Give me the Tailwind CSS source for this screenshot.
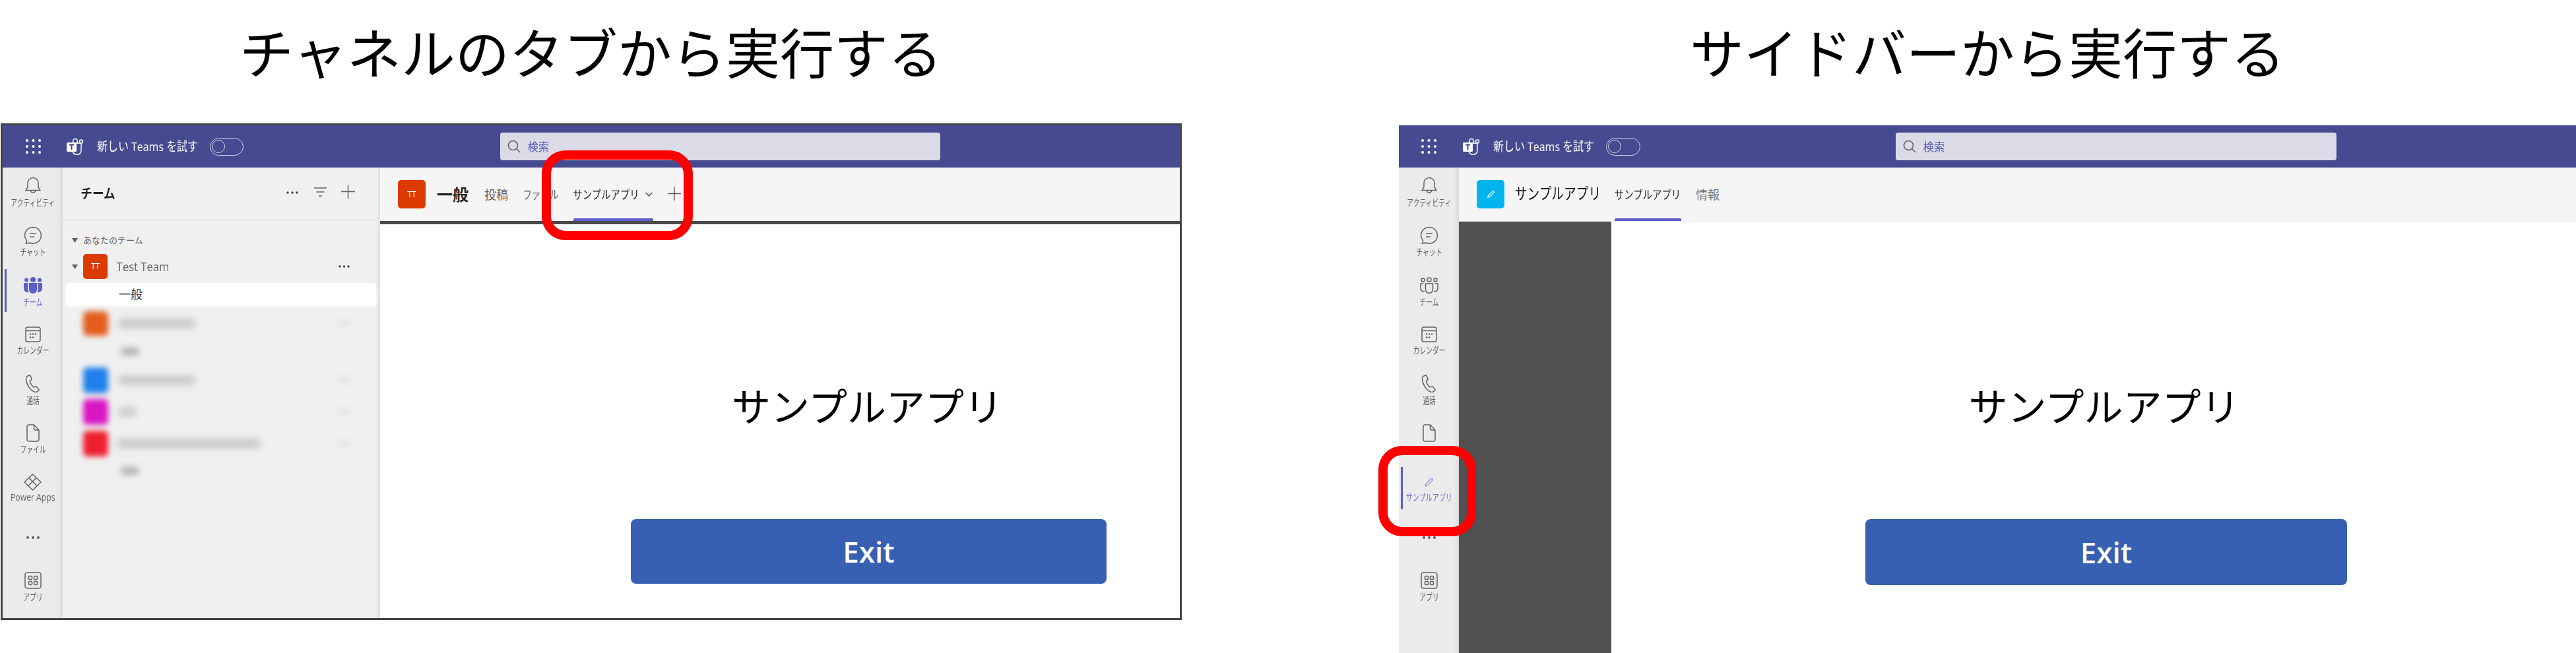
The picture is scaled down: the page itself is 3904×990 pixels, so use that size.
<!doctype html>
<html lang="ja">
<head>
<meta charset="utf-8">
<script src="https://cdn.jsdelivr.net/npm/@tailwindcss/browser@4"></script>
</head>
<body class="bg-white font-['Open_Sans','Noto_Sans_CJK_JP',sans-serif]">
<div class="w-[3904px] h-[990px] overflow-hidden grid grid-cols-[1791px_329px_1784px] grid-rows-[187px_803px]">
  <!-- titles -->
  <div class="flex items-center justify-center text-[82px] leading-none text-black pb-[27px] whitespace-nowrap">チャネルのタブから実行する</div>
  <div></div>
  <div class="flex items-center justify-center text-[82px] leading-none text-black pb-[27px] whitespace-nowrap">サイドバーから実行する</div>

  <!-- LEFT WINDOW -->
  <div class="relative ml-px h-[753px] border-[3px] border-[#444444] flex flex-col">
    <div class="h-[64px] shrink-0 bg-[#464a91] flex items-center text-white">
      <svg class="ml-[35px] w-[23px] h-[22px]" viewBox="0 0 23 22" fill="#fff"><circle cx="2" cy="2" r="2"/><circle cx="11.500" cy="2" r="2"/><circle cx="21" cy="2" r="2"/><circle cx="2" cy="11" r="2"/><circle cx="11.500" cy="11" r="2"/><circle cx="21" cy="11" r="2"/><circle cx="2" cy="20" r="2"/><circle cx="11.500" cy="20" r="2"/><circle cx="21" cy="20" r="2"/></svg>
      <svg class="ml-[39px] w-[26px] h-[26px]" viewBox="0 0 26 26"><path d="M8 8h14v11a6.500 6.500 0 0 1-13 0z" fill="none" stroke="#fff" stroke-width="1.500"/><circle cx="13" cy="5" r="3.500" fill="none" stroke="#fff" stroke-width="1.500"/><circle cx="22" cy="5.500" r="2.500" fill="none" stroke="#fff" stroke-width="1.500"/><rect x="0" y="7" width="15" height="14" rx="1.500" fill="#fff"/><path d="M4 10.500h7M7.500 10.500v7.500" stroke="#464a91" stroke-width="2" fill="none"/></svg>
      <div class="ml-[18px] w-[157px] flex justify-center whitespace-nowrap text-[19px] leading-none scale-x-[0.84]"><span class="shrink-0">新しい Teams を試す</span></div>
      <div class="ml-[16px] w-[51px] h-[27px] rounded-full border-[1.5px] border-[#d5d6e6] flex items-center pl-[2px]"><div class="w-[20px] h-[20px] rounded-full border-[1.5px] border-[#d5d6e6]"></div></div>
      <div class="ml-[389px] w-[667px] h-[42px] bg-[#dbdbe8] rounded-[4px] flex items-center pl-[11px]">
        <svg class="w-[20px] h-[20px]" viewBox="0 0 20 20" fill="none" stroke="#616161" stroke-width="1.600"><circle cx="8.500" cy="8.500" r="7"/><path d="M13.500 13.500L19 19"/></svg>
        <span class="ml-[10px] text-[17px] leading-none text-[#4f56b0] scale-x-[0.95]">検索</span>
      </div>
    </div>
    <div class="flex flex-1 min-h-0">
      <!-- rail -->
      <div class="w-[91px] shrink-0 bg-[#ebebeb] shadow-[inset_-8px_0_6px_-6px_rgba(0,0,0,0.1)] pt-[14px] relative">
        <div class="absolute left-[3px] top-[154px] w-[3px] h-[65px] bg-[#5b5fc7]"></div>
        <div class="h-[75px] flex flex-col items-center">
          <svg class="w-[24px] h-[26px]" viewBox="0 0 24 26" fill="none" stroke="#616161" stroke-width="1.500"><path d="M12 1.500a8 8 0 0 0-8 8v6l-2.800 5h21.600l-2.800-5v-6a8 8 0 0 0-8-8zM8.500 20.800a3.500 3.500 0 0 0 7 0"/></svg>
          <div class="mt-[6px] h-[14px] flex justify-center whitespace-nowrap text-[14px] leading-[14px] text-[#616161] scale-x-[0.7]">アクティビティ</div>
        </div>
        <div class="h-[77px] flex flex-col items-center">
          <svg class="w-[28px] h-[27px]" viewBox="0 0 28 27" fill="none" stroke="#616161" stroke-width="1.500"><path d="M14 1.500a12.300 12.300 0 1 1-5 23.500c-2 .8-4 1-6 .8 1.200-1 1.800-2.500 1.600-4A12.300 12.300 0 0 1 14 1.500z"/><path d="M9 11h10M9 16h7"/></svg>
          <div class="mt-[5px] h-[14px] flex justify-center whitespace-nowrap text-[14px] leading-[14px] text-[#616161] scale-x-[0.7]">チャット</div>
        </div>
        <div class="h-[75px] flex flex-col items-center">
          <svg class="w-[28px] h-[26px]" viewBox="0 0 28 26" fill="#5b5fc7"><circle cx="14" cy="4" r="4"/><circle cx="4" cy="4.500" r="3"/><circle cx="24" cy="4.500" r="3"/><path d="M8 9h12v10a6 6 0 0 1-12 0z"/><path d="M0 9h6.500v9c0 2 .4 3.500 1 5A6 6 0 0 1 0 17zM28 9h-6.500v9c0 2-.4 3.500-1 5a6 6 0 0 0 7.500-6z"/></svg>
          <div class="mt-[5px] h-[14px] flex justify-center whitespace-nowrap text-[14px] leading-[14px] text-[#5b5fc7] scale-x-[0.7]">チーム</div>
        </div>
        <div class="h-[73px] flex flex-col items-center">
          <svg class="w-[24px] h-[24px]" viewBox="0 0 24 24" fill="none" stroke="#616161" stroke-width="1.500"><rect x="1" y="1" width="22" height="22" rx="3"/><path d="M1 6.500h22"/><g fill="#616161" stroke="none"><circle cx="8" cy="11.500" r="1.300"/><circle cx="12" cy="11.500" r="1.300"/><circle cx="16" cy="11.500" r="1.300"/><circle cx="8" cy="16.500" r="1.300"/><circle cx="12" cy="16.500" r="1.300"/></g></svg>
          <div class="mt-[5px] h-[14px] flex justify-center whitespace-nowrap text-[14px] leading-[14px] text-[#616161] scale-x-[0.7]">カレンダー</div>
        </div>
        <div class="h-[75px] flex flex-col items-center">
          <svg class="w-[24px] h-[27px]" viewBox="0 0 24 27" fill="none" stroke="#616161" stroke-width="1.500"><path d="M3 2.500l3-1.300c1-.3 1.800 0 2.200.9l1.700 4c.3.800.1 1.600-.6 2.100l-2 1.600c.8 3.500 3 7 6 9.300l2.600-1c.8-.3 1.600-.1 2.100.6l2.600 3.400c.6.800.4 1.800-.4 2.400l-2.300 1.500c-1 .6-2.300.7-3.400.2C7 23.500 2 15 1.500 6c0-1.500.5-2.800 1.500-3.500z"/></svg>
          <div class="mt-[5px] h-[14px] flex justify-center whitespace-nowrap text-[14px] leading-[14px] text-[#616161] scale-x-[0.7]">通話</div>
        </div>
        <div class="h-[75px] flex flex-col items-center">
          <svg class="w-[20px] h-[27px]" viewBox="0 0 20 27" fill="none" stroke="#616161" stroke-width="1.500"><path d="M3.500 1h8l7.500 8v14.500a2.500 2.500 0 0 1-2.500 2.500h-13A2.500 2.500 0 0 1 1 23.500v-20A2.500 2.500 0 0 1 3.500 1zM11.500 1v5.500a2.500 2.500 0 0 0 2.500 2.500h5"/></svg>
          <div class="mt-[4px] h-[14px] flex justify-center whitespace-nowrap text-[14px] leading-[14px] text-[#616161] scale-x-[0.7]">ファイル</div>
        </div>
        <div class="h-[75px] flex flex-col items-center">
          <svg class="w-[27px] h-[26px]" viewBox="0 0 27 26" fill="none" stroke="#616161" stroke-width="1.500"><path d="M13.500 1L26 13 13.500 25 1 13zM8 6.500l12 12M19 6.500L7 18.500"/></svg>
          <div class="mt-[3px] h-[14px] flex justify-center whitespace-nowrap text-[14px] leading-[14px] text-[#616161] scale-x-[0.87]">Power Apps</div>
        </div>
        <div class="h-[74px] flex justify-center pt-[19px]">
          <svg class="w-[22px] h-[6px]" viewBox="0 0 22 6" fill="#616161"><circle cx="3" cy="3" r="2"/><circle cx="11" cy="3" r="2"/><circle cx="19" cy="3" r="2"/></svg>
        </div>
        <div class="h-[60px] flex flex-col items-center">
          <svg class="w-[26px] h-[26px]" viewBox="0 0 26 26" fill="none" stroke="#616161" stroke-width="1.500"><rect x="1" y="1" width="24" height="24" rx="3.500"/><rect x="6.500" y="6.500" width="5" height="5" rx="1"/><rect x="14.500" y="6.500" width="5" height="5" rx="1"/><rect x="6.500" y="14.500" width="5" height="5" rx="1"/><rect x="14.500" y="14.500" width="5" height="5" rx="1"/></svg>
          <div class="mt-[5px] h-[14px] flex justify-center whitespace-nowrap text-[14px] leading-[14px] text-[#616161] scale-x-[0.7]">アプリ</div>
        </div>
      </div>
      <!-- team panel -->
      <div class="w-[481px] shrink-0 bg-[#f0f0f0] shadow-[inset_-8px_0_6px_-6px_rgba(0,0,0,0.1)] flex flex-col">
        <div class="h-[81px] shrink-0 border-b-2 border-[#e8e8e8] flex items-center pl-[27px]">
          <div class="w-[53px] flex justify-center whitespace-nowrap font-bold text-[20px] leading-none text-[#242424] scale-x-[0.88]">チーム</div>
          <svg class="ml-[259px] w-[18px] h-[6px] -mt-[4px]" viewBox="0 0 18 6" fill="#424242"><circle cx="2" cy="3" r="1.700"/><circle cx="9" cy="3" r="1.700"/><circle cx="16" cy="3" r="1.700"/></svg>
          <svg class="ml-[24px] w-[19px] h-[14px] -mt-[6px]" viewBox="0 0 19 14" fill="none" stroke="#616161" stroke-width="1.500"><path d="M0 1h19M3.500 7h12M7 13h5"/></svg>
          <svg class="ml-[22px] w-[21px] h-[21px] -mt-[6px]" viewBox="0 0 21 21" fill="none" stroke="#616161" stroke-width="1.500"><path d="M0 10.500h21M10.500 0v21"/></svg>
        </div>
        <div class="pl-[14px] mt-[19px] h-[20px] flex items-center">
          <svg class="w-[9px] h-[7px]" viewBox="0 0 9 7" fill="#616161"><path d="M0 0h9L4.500 7z"/></svg>
          <div class="ml-[8px] whitespace-nowrap text-[13px] leading-none text-[#616161]">あなたのチーム</div>
        </div>
        <div class="pl-[14px] mt-[11px] h-[38px] flex items-center">
          <svg class="w-[9px] h-[7px]" viewBox="0 0 9 7" fill="#616161"><path d="M0 0h9L4.500 7z"/></svg>
          <div class="ml-[8px] w-[37px] h-[38px] rounded-[5px] bg-[#dc3b00] flex items-center justify-center text-white text-[12px] leading-none">TT</div>
          <div class="ml-[14px] w-[79px] flex justify-center whitespace-nowrap text-[18px] leading-none text-[#616161] scale-x-[0.92]">Test Team</div>
          <svg class="ml-[257px] w-[17px] h-[6px]" viewBox="0 0 17 6" fill="#424242"><circle cx="2" cy="3" r="1.700"/><circle cx="8.500" cy="3" r="1.700"/><circle cx="15" cy="3" r="1.700"/></svg>
        </div>
        <div class="ml-[5px] mr-[6px] mt-[6px] h-[33px] bg-white rounded-t-[5px] flex items-center pl-[80px] text-[18px] leading-none text-[#424242] shadow-[0_3px_4px_rgba(255,255,255,0.8)]">一般</div>
        <!-- blurred rows -->
        <div class="pl-[31px] mt-[10px] h-[36px] flex items-center">
          <div class="w-[38px] h-[37px] rounded-[6px] bg-[#e35d1f] blur-[4px]"></div>
          <div class="ml-[16px] w-[115px] h-[13px] bg-[#c4c4c4] blur-[6px]"></div>
          <div class="ml-[218px] w-[18px] h-[4px] bg-[#d8d8d8] blur-[4px]"></div>
        </div>
        <div class="pl-[89px] mt-[16px] h-[18px] flex items-center"><div class="w-[26px] h-[12px] bg-[#b4b4b4] blur-[5px]"></div></div>
        <div class="pl-[31px] mt-[15px] h-[38px] flex items-center">
          <div class="w-[38px] h-[39px] rounded-[6px] bg-[#2280ea] blur-[4px]"></div>
          <div class="ml-[16px] w-[115px] h-[13px] bg-[#c4c4c4] blur-[6px]"></div>
          <div class="ml-[218px] w-[18px] h-[4px] bg-[#d8d8d8] blur-[4px]"></div>
        </div>
        <div class="pl-[31px] mt-[10px] h-[38px] flex items-center">
          <div class="w-[38px] h-[39px] rounded-[6px] bg-[#d916c3] blur-[4px]"></div>
          <div class="ml-[16px] w-[26px] h-[13px] bg-[#c8c8c8] blur-[6px]"></div>
          <div class="ml-[307px] w-[18px] h-[4px] bg-[#d8d8d8] blur-[4px]"></div>
        </div>
        <div class="pl-[31px] mt-[10px] h-[38px] flex items-center">
          <div class="w-[38px] h-[39px] rounded-[6px] bg-[#ee2030] blur-[4px]"></div>
          <div class="ml-[14px] w-[216px] h-[13px] bg-[#c4c4c4] blur-[6px]"></div>
          <div class="ml-[119px] w-[18px] h-[4px] bg-[#d8d8d8] blur-[4px]"></div>
        </div>
        <div class="pl-[89px] mt-[14px] h-[18px] flex items-center"><div class="w-[26px] h-[12px] bg-[#b4b4b4] blur-[5px]"></div></div>
      </div>
      <!-- main -->
      <div class="flex-1 min-w-0 flex flex-col bg-white">
        <div class="h-[86px] shrink-0 bg-[#f5f5f5] border-b-[5px] border-[#4a4a4a] flex items-start pl-[27px] pt-[19px] relative">
          <div class="w-[42px] h-[43px] rounded-[5px] bg-[#dc3b00] flex items-center justify-center text-white text-[12px] leading-none">TT</div>
          <div class="ml-[17px] w-[48px] h-[43px] flex items-center justify-center whitespace-nowrap font-bold text-[24px] leading-none text-[#242424]">一般</div>
          <div class="ml-[24px] w-[36px] h-[43px] flex items-center justify-center whitespace-nowrap text-[18px] leading-none text-[#616161]">投稿</div>
          <div class="ml-[23px] w-[53px] h-[43px] flex items-center justify-center whitespace-nowrap text-[18px] leading-none text-[#616161] scale-x-[0.75]">ファイル</div>
          <div class="ml-[23px] w-[99px] h-[43px] flex items-center justify-center whitespace-nowrap text-[18px] leading-none text-[#242424] scale-x-[0.8]">サンプルアプリ</div>
          <svg class="ml-[10px] mt-[18px] w-[11px] h-[7px]" viewBox="0 0 11 7" fill="none" stroke="#424242" stroke-width="1.300"><path d="M.5 1l5 5 5-5"/></svg>
          <svg class="ml-[23px] mt-[10px] w-[20px] h-[21px]" viewBox="0 0 20 21" fill="none" stroke="#616161" stroke-width="1.500"><path d="M0 10.500h20M10 0v21"/></svg>
          <div class="absolute left-[293px] top-[77px] w-[121px] h-[4px] rounded-t-[2px] bg-[#5b5fc7]"></div>
        </div>
        <div class="w-[721px] ml-[378px] mt-[236px] h-[80px] flex items-center justify-center whitespace-nowrap text-[59px] leading-none text-black">サンプルアプリ</div>
        <div class="w-[721px] ml-[380px] mt-[131px] h-[98px] rounded-[8px] bg-[#3760b2] flex items-center justify-center font-semibold text-[44px] leading-none text-white">Exit</div>
      </div>
    </div>
    <!-- annotation -->
    <div class="absolute left-[817px] top-[38px] w-[229px] h-[136px] rounded-[36px] border-[14px] border-[#ff0000]"></div>
  </div>

  <div></div>

  <!-- RIGHT WINDOW -->
  <div class="relative mt-[3px] flex flex-col h-[800px]">
    <div class="h-[64px] shrink-0 bg-[#464a91] flex items-center text-white">
      <svg class="ml-[34px] w-[23px] h-[22px]" viewBox="0 0 23 22" fill="#fff"><circle cx="2" cy="2" r="2"/><circle cx="11.500" cy="2" r="2"/><circle cx="21" cy="2" r="2"/><circle cx="2" cy="11" r="2"/><circle cx="11.500" cy="11" r="2"/><circle cx="21" cy="11" r="2"/><circle cx="2" cy="20" r="2"/><circle cx="11.500" cy="20" r="2"/><circle cx="21" cy="20" r="2"/></svg>
      <svg class="ml-[40px] w-[26px] h-[26px]" viewBox="0 0 26 26"><path d="M8 8h14v11a6.500 6.500 0 0 1-13 0z" fill="none" stroke="#fff" stroke-width="1.500"/><circle cx="13" cy="5" r="3.500" fill="none" stroke="#fff" stroke-width="1.500"/><circle cx="22" cy="5.500" r="2.500" fill="none" stroke="#fff" stroke-width="1.500"/><rect x="0" y="7" width="15" height="14" rx="1.500" fill="#fff"/><path d="M4 10.500h7M7.500 10.500v7.500" stroke="#464a91" stroke-width="2" fill="none"/></svg>
      <div class="ml-[18px] w-[157px] flex justify-center whitespace-nowrap text-[19px] leading-none scale-x-[0.84]"><span class="shrink-0">新しい Teams を試す</span></div>
      <div class="ml-[16px] w-[52px] h-[27px] rounded-full border-[1.5px] border-[#d5d6e6] flex items-center pl-[2px]"><div class="w-[20px] h-[20px] rounded-full border-[1.5px] border-[#d5d6e6]"></div></div>
      <div class="ml-[387px] w-[668px] h-[42px] bg-[#dbdbe8] rounded-[4px] flex items-center pl-[11px]">
        <svg class="w-[20px] h-[20px]" viewBox="0 0 20 20" fill="none" stroke="#616161" stroke-width="1.600"><circle cx="8.500" cy="8.500" r="7"/><path d="M13.500 13.500L19 19"/></svg>
        <span class="ml-[10px] text-[17px] leading-none text-[#4f56b0] scale-x-[0.95]">検索</span>
      </div>
    </div>
    <div class="flex flex-1 min-h-0">
      <div class="w-[91px] shrink-0 bg-[#ebebeb] shadow-[inset_-8px_0_6px_-6px_rgba(0,0,0,0.1)] pt-[14px] relative">
        <div class="h-[75px] flex flex-col items-center">
          <svg class="w-[24px] h-[26px]" viewBox="0 0 24 26" fill="none" stroke="#616161" stroke-width="1.500"><path d="M12 1.500a8 8 0 0 0-8 8v6l-2.800 5h21.600l-2.800-5v-6a8 8 0 0 0-8-8zM8.500 20.800a3.500 3.500 0 0 0 7 0"/></svg>
          <div class="mt-[6px] h-[14px] flex justify-center whitespace-nowrap text-[14px] leading-[14px] text-[#616161] scale-x-[0.7]">アクティビティ</div>
        </div>
        <div class="h-[77px] flex flex-col items-center">
          <svg class="w-[28px] h-[27px]" viewBox="0 0 28 27" fill="none" stroke="#616161" stroke-width="1.500"><path d="M14 1.500a12.300 12.300 0 1 1-5 23.500c-2 .8-4 1-6 .8 1.200-1 1.800-2.500 1.600-4A12.300 12.300 0 0 1 14 1.500z"/><path d="M9 11h10M9 16h7"/></svg>
          <div class="mt-[5px] h-[14px] flex justify-center whitespace-nowrap text-[14px] leading-[14px] text-[#616161] scale-x-[0.7]">チャット</div>
        </div>
        <div class="h-[75px] flex flex-col items-center">
          <svg class="w-[28px] h-[26px]" viewBox="0 0 28 26" fill="none" stroke="#616161" stroke-width="1.500"><circle cx="14" cy="4" r="3"/><circle cx="4.500" cy="4.500" r="2.500"/><circle cx="23.500" cy="4.500" r="2.500"/><path d="M8.500 10h11v9a5.500 5.500 0 0 1-11 0zM5.500 10H1v7a5 5 0 0 0 6 5M22.500 10H27v7a5 5 0 0 1-6 5"/></svg>
          <div class="mt-[5px] h-[14px] flex justify-center whitespace-nowrap text-[14px] leading-[14px] text-[#616161] scale-x-[0.7]">チーム</div>
        </div>
        <div class="h-[73px] flex flex-col items-center">
          <svg class="w-[24px] h-[24px]" viewBox="0 0 24 24" fill="none" stroke="#616161" stroke-width="1.500"><rect x="1" y="1" width="22" height="22" rx="3"/><path d="M1 6.500h22"/><g fill="#616161" stroke="none"><circle cx="8" cy="11.500" r="1.300"/><circle cx="12" cy="11.500" r="1.300"/><circle cx="16" cy="11.500" r="1.300"/><circle cx="8" cy="16.500" r="1.300"/><circle cx="12" cy="16.500" r="1.300"/></g></svg>
          <div class="mt-[5px] h-[14px] flex justify-center whitespace-nowrap text-[14px] leading-[14px] text-[#616161] scale-x-[0.7]">カレンダー</div>
        </div>
        <div class="h-[75px] flex flex-col items-center">
          <svg class="w-[24px] h-[27px]" viewBox="0 0 24 27" fill="none" stroke="#616161" stroke-width="1.500"><path d="M3 2.500l3-1.300c1-.3 1.800 0 2.200.9l1.700 4c.3.800.1 1.600-.6 2.100l-2 1.600c.8 3.500 3 7 6 9.300l2.600-1c.8-.3 1.600-.1 2.100.6l2.600 3.400c.6.800.4 1.800-.4 2.400l-2.300 1.500c-1 .6-2.300.7-3.400.2C7 23.500 2 15 1.500 6c0-1.500.5-2.800 1.500-3.500z"/></svg>
          <div class="mt-[5px] h-[14px] flex justify-center whitespace-nowrap text-[14px] leading-[14px] text-[#616161] scale-x-[0.7]">通話</div>
        </div>
        <div class="h-[45px] flex flex-col items-center">
          <svg class="w-[20px] h-[27px]" viewBox="0 0 20 27" fill="none" stroke="#616161" stroke-width="1.500"><path d="M3.500 1h8l7.500 8v14.500a2.500 2.500 0 0 1-2.500 2.500h-13A2.500 2.500 0 0 1 1 23.500v-20A2.500 2.500 0 0 1 3.500 1zM11.500 1v5.500a2.500 2.500 0 0 0 2.500 2.500h5"/></svg>
          <div class="mt-[4px] h-[14px] flex justify-center whitespace-nowrap text-[14px] leading-[14px] text-[#616161] scale-x-[0.7]">ファイル</div>
        </div>
        <div class="h-[124px] bg-[#ebebeb] relative shadow-[inset_-8px_0_6px_-6px_rgba(0,0,0,0.1)] flex flex-col items-center pt-[37px]">
          <div class="absolute left-[3px] top-[20px] w-[3px] h-[64px] bg-[#5b5fc7]"></div>
          <svg class="w-[13px] h-[13px]" viewBox="0 0 13 13" fill="none" stroke="#8b8fd8" stroke-width="1.200"><path d="M1 12l.7-3.300L9.500 1a1.600 1.600 0 0 1 2.400 2.300L4.300 11.200z"/></svg>
          <div class="mt-[9px] h-[14px] flex justify-center whitespace-nowrap text-[14px] leading-[14px] text-[#6f73d2] scale-x-[0.72]">サンプルアプリ</div>
        </div>
        <div class="h-[55px] flex justify-center">
          <svg class="w-[22px] h-[6px]" viewBox="0 0 22 6" fill="#616161"><circle cx="3" cy="3" r="2"/><circle cx="11" cy="3" r="2"/><circle cx="19" cy="3" r="2"/></svg>
        </div>
        <div class="h-[60px] flex flex-col items-center">
          <svg class="w-[26px] h-[26px]" viewBox="0 0 26 26" fill="none" stroke="#616161" stroke-width="1.500"><rect x="1" y="1" width="24" height="24" rx="3.500"/><rect x="6.500" y="6.500" width="5" height="5" rx="1"/><rect x="14.500" y="6.500" width="5" height="5" rx="1"/><rect x="6.500" y="14.500" width="5" height="5" rx="1"/><rect x="14.500" y="14.500" width="5" height="5" rx="1"/></svg>
          <div class="mt-[5px] h-[14px] flex justify-center whitespace-nowrap text-[14px] leading-[14px] text-[#616161] scale-x-[0.7]">アプリ</div>
        </div>
      </div>
      <div class="flex-1 min-w-0 flex flex-col">
        <div class="h-[82px] shrink-0 bg-[#f5f5f5] border-b border-[#ececec] flex items-start pl-[27px] pt-[19px] relative">
          <div class="w-[42px] h-[43px] rounded-[5px] bg-[#00b4f0] flex items-center justify-center">
            <svg class="w-[11px] h-[11px]" viewBox="0 0 13 13" fill="none" stroke="#fff" stroke-width="1.300"><path d="M1 12l.7-3.300L9.500 1a1.600 1.600 0 0 1 2.400 2.300L4.300 11.200z"/></svg>
          </div>
          <div class="ml-[17px] w-[128px] h-[40px] flex items-center justify-center whitespace-nowrap text-[24px] leading-none text-[#111111] scale-x-[0.78]">サンプルアプリ</div>
          <div class="ml-[22px] w-[100px] h-[43px] flex items-center justify-center whitespace-nowrap text-[18px] leading-none text-[#242424] scale-x-[0.8]">サンプルアプリ</div>
          <div class="ml-[23px] w-[36px] h-[43px] flex items-center justify-center whitespace-nowrap text-[18px] leading-none text-[#757575]">情報</div>
          <div class="absolute left-[236px] top-[77px] w-[101px] h-[4px] rounded-t-[2px] bg-[#5b5fc7]"></div>
        </div>
        <div class="flex flex-1 min-h-0">
          <div class="w-[231px] shrink-0 bg-[#515151]"></div>
          <div class="flex-1 bg-white pl-[385px] flex flex-col">
            <div class="w-[730px] -ml-[3px] mt-[240px] h-[80px] flex items-center justify-center whitespace-nowrap text-[59px] leading-none text-black">サンプルアプリ</div>
            <div class="w-[730px] mt-[131px] h-[100px] rounded-[8px] bg-[#3760b2] flex items-center justify-center font-semibold text-[44px] leading-none text-white">Exit</div>
          </div>
        </div>
      </div>
    </div>
    <div class="absolute left-[-31px] top-[486px] w-[148px] h-[137px] rounded-[36px] border-[14px] border-[#ff0000]"></div>
  </div>
</div>
</body>
</html>
